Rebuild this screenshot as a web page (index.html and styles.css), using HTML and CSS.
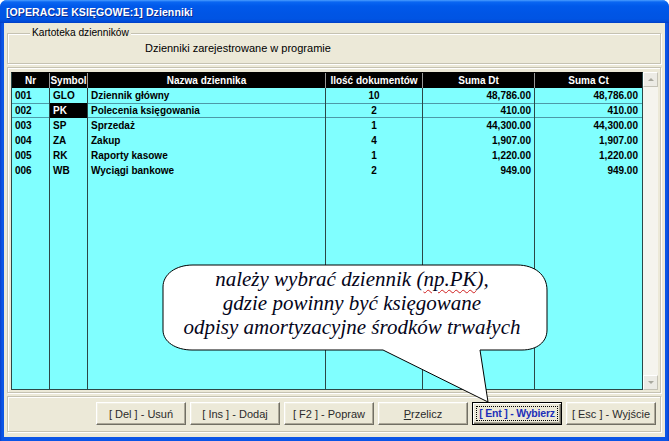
FILE: index.html
```html
<!DOCTYPE html>
<html lang="pl">
<head>
<meta charset="utf-8">
<title>Dzienniki</title>
<link rel="stylesheet" href="styles.css">
</head>
<body>
<div class="window">
  <div class="titlebar"><span class="title">[OPERACJE KSIĘGOWE:1] Dzienniki</span></div>
  <div class="client">
    <div class="group">
      <span class="legend">Kartoteka dzienników</span>
      <div class="caption">Dzienniki zarejestrowane w programie</div>
    </div>
    <div class="panel">
      <div class="grid">
        <div class="hd">Nr</div><div class="hd">Symbol</div><div class="hd">Nazwa dziennika</div><div class="hd">Ilość dokumentów</div><div class="hd">Suma Dt</div><div class="hd last">Suma Ct</div>

        <div class="cd">001</div><div class="cd">GLO</div><div class="cd">Dziennik główny</div><div class="cd c">10</div><div class="cd r">48,786.00</div><div class="cd r last">48,786.00</div>

        <div class="cd cur">002</div><div class="cd cur sel">PK</div><div class="cd cur">Polecenia księgowania</div><div class="cd cur c">2</div><div class="cd cur r">410.00</div><div class="cd cur r last">410.00</div>

        <div class="cd">003</div><div class="cd">SP</div><div class="cd">Sprzedaż</div><div class="cd c">1</div><div class="cd r">44,300.00</div><div class="cd r last">44,300.00</div>

        <div class="cd">004</div><div class="cd">ZA</div><div class="cd">Zakup</div><div class="cd c">4</div><div class="cd r">1,907.00</div><div class="cd r last">1,907.00</div>

        <div class="cd">005</div><div class="cd">RK</div><div class="cd">Raporty kasowe</div><div class="cd c">1</div><div class="cd r">1,220.00</div><div class="cd r last">1,220.00</div>

        <div class="cd">006</div><div class="cd">WB</div><div class="cd">Wyciągi bankowe</div><div class="cd c">2</div><div class="cd r">949.00</div><div class="cd r last">949.00</div>

        <div class="cd"></div><div class="cd"></div><div class="cd"></div><div class="cd"></div><div class="cd"></div><div class="cd last"></div>
      </div>
      <div class="scrollbar">
        <div class="sb-btn"><span class="arrow up"></span></div>
        <div class="sb-track"></div>
        <div class="sb-btn"><span class="arrow down"></span></div>
      </div>
    </div>
    <div class="buttons">
      <button class="btn">[ Del ] - Usuń</button>
      <button class="btn">[ Ins ] - Dodaj</button>
      <button class="btn">[ F2 ] - Popraw</button>
      <button class="btn"><u>P</u>rzelicz</button>
      <button class="btn btn-default"><span class="focus">[ Ent ] - Wybierz</span></button>
      <button class="btn">[ Esc ] - Wyjście</button>
    </div>
  </div>

  <svg class="bubble" width="669" height="441" viewBox="0 0 669 441" aria-hidden="true">
    <path d="M193,265 L517,265 C535,265 547,275 547,290 L547,330 C547,342 537,350 522,350 L480,350 L488,402 L383,350 L192,350 C176,350 163,342 163,330 L163,287 C163,274 176,265 193,265 Z" fill="#fff" stroke="#000" stroke-width="1"/>
  </svg>
  <div class="bubble-text">należy wybrać dziennik (<span class="spell">np.PK</span>),<br>gdzie powinny być księgowane<br>odpisy amortyzacyjne środków trwałych</div>
</div>
</body>
</html>
```

FILE: styles.css
```css
html, body {
  margin: 0;
  padding: 0;
  background: #ffffff;
}

body {
  font-family: "Liberation Sans", Arial, sans-serif;
}

.window {
  position: relative;
  width: 669px;
  height: 441px;
  box-sizing: border-box;
  display: flex;
  flex-direction: column;
  background: linear-gradient(to right, #0a3fc8 0, #0b55e6 2px, #0b55e6 calc(100% - 2px), #0a3fc8 100%);
  border-radius: 7px 7px 0 0;
  overflow: hidden;
}

.titlebar {
  height: 23px;
  flex: none;
  display: flex;
  align-items: center;
  padding-left: 6px;
  background: linear-gradient(to bottom, #4a9dff 0, #0a66f2 2px, #0059ea 6px, #0055e5 14px, #0054e3 19px, #0047d4 22px, #003cc0 23px);
}

.title {
  color: #ffffff;
  font-weight: bold;
  font-size: 10.5px;
  letter-spacing: 0.1px;
  text-shadow: 1px 1px 0 #0a2a90;
}

.client {
  flex: 1;
  margin: 0 4px 4px 4px;
  padding: 10px 4px 5px 3px;
  background: #ece9d8;
  display: flex;
  flex-direction: column;
  font-size: 11px;
  color: #000;
}

.group,
.panel,
.buttons {
  box-sizing: border-box;
  border: 1px solid #c5c2b2;
  box-shadow: inset 1px 1px 0 #ffffff, 1px 1px 0 #ffffff;
}

.group {
  position: relative;
  height: 31px;
  flex: none;
}

.legend {
  position: absolute;
  top: -8px;
  left: 22px;
  padding: 0 2px;
  background: #ece9d8;
  font-size: 10.2px;
  line-height: 14px;
}

.caption {
  padding: 8px 0 0 137px;
  font-size: 11px;
  line-height: 13px;
}

.panel {
  margin-top: 3px;
  height: 326px;
  flex: none;
  display: flex;
  padding: 4px 1px 1px 3px;
}

.grid {
  width: 632px;
  height: 318px;
  box-sizing: border-box;
  border: 1px solid #2b4848;
  border-top-color: #000;
  display: grid;
  grid-template-columns: 38px 38px 238px 97px 112px 107px;
  grid-template-rows: 15px repeat(6, 15px) 1fr;
  background: #80ffff;
  font-size: 10px;
  font-weight: bold;
}

.hd {
  background: #000;
  color: #fff;
  text-align: center;
  line-height: 15px;
  border-right: 1px solid #9a9a9a;
  white-space: nowrap;
}

.cd {
  border-right: 1px solid #2b4848;
  line-height: 15px;
  padding: 0 3px;
  white-space: nowrap;
  overflow: hidden;
  color: #000;
}

.hd.last,
.cd.last {
  border-right: none;
}

.cd.c { text-align: center; }
.cd.r { text-align: right; }
.cd.r.last { padding-right: 4px; }

.cd.cur {
  box-shadow: inset 0 1px 0 #4d9aa8, inset 0 -1px 0 #4d9aa8;
}

.cd.sel {
  background: #000;
  color: #fff;
  box-shadow: none;
}

.scrollbar {
  width: 15px;
  height: 318px;
  display: flex;
  flex-direction: column;
  background: #f5f4ee;
}

.sb-btn {
  height: 15px;
  flex: none;
  box-sizing: border-box;
  background: #ecebe5;
  border: 1px solid;
  border-color: #ffffff #c4c2b6 #c4c2b6 #ffffff;
  display: flex;
  align-items: center;
  justify-content: center;
}

.sb-track {
  flex: 1;
}

.arrow {
  width: 0;
  height: 0;
  border-left: 3px solid transparent;
  border-right: 3px solid transparent;
}

.arrow.up { border-bottom: 3px solid #a8a89e; }
.arrow.down { border-top: 3px solid #a8a89e; }

.buttons {
  margin-top: 3px;
  height: 36px;
  flex: none;
  display: flex;
  justify-content: flex-end;
  align-items: flex-start;
  gap: 4px;
  padding: 5px 4px 0 0;
}

.btn {
  width: 90px;
  height: 23px;
  box-sizing: border-box;
  margin: 0;
  padding: 0;
  background: #ece9d8;
  border: 1px solid;
  border-color: #ffffff #716f64 #716f64 #ffffff;
  box-shadow: inset -1px -1px 0 #aca899, inset 1px 1px 0 #f1efe2;
  font-family: "Liberation Sans", Arial, sans-serif;
  font-size: 11px;
  color: #2b2b2b;
  white-space: nowrap;
}

.btn-default {
  border: 1px solid #000;
  box-shadow: inset 1px 1px 0 #ffffff, inset -1px -1px 0 #716f64, inset -2px -2px 0 #aca899;
  color: #1c2fb8;
  font-weight: bold;
  font-size: 10.5px;
  letter-spacing: -0.2px;
  padding: 3px;
}

.focus {
  display: block;
  height: 15px;
  line-height: 13px;
  box-sizing: border-box;
  border: 1px dotted #000;
  white-space: nowrap;
}

.bubble {
  position: absolute;
  left: 0;
  top: 0;
  pointer-events: none;
}

.bubble-text {
  position: absolute;
  left: 162px;
  top: 267px;
  width: 380px;
  text-align: center;
  font-family: "Liberation Serif", "Times New Roman", serif;
  font-style: italic;
  font-size: 21px;
  line-height: 24px;
  color: #05051a;
}

.spell {
  text-decoration: underline wavy #d02020;
  text-decoration-thickness: 1px;
  text-underline-offset: 3px;
}
```
